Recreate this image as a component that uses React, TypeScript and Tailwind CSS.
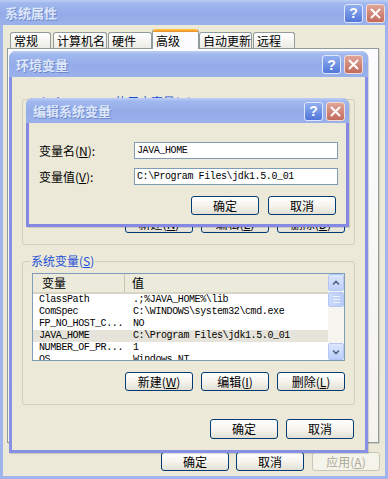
import React from 'react';

const cjk = "font-['Noto_Sans_CJK_SC',sans-serif]";
const mono = "font-['Liberation_Mono',monospace] text-[10px] tracking-[-0.4px]";

const TitleButtons = ({ className }: { className: string }) => (
  <div className={`flex gap-[3px] ${className}`}>
    <div className="flex h-[19px] w-[19px] items-center justify-center rounded-[3px] border border-[#dfe7fb] bg-gradient-to-b from-[#93aff0] to-[#5176d8] font-['Liberation_Sans',sans-serif] text-[14px] font-bold leading-none text-white">
      ?
    </div>
    <div className="flex h-[19px] w-[19px] items-center justify-center rounded-[3px] border border-[#f3dcd6] bg-gradient-to-b from-[#e0a598] to-[#c26a5c]">
      <svg width="11" height="11" viewBox="0 0 11 11">
        <path d="M1.5 1.5 L9.5 9.5 M9.5 1.5 L1.5 9.5" stroke="white" strokeWidth="2" strokeLinecap="round" />
      </svg>
    </div>
  </div>
);

const TitleBar = ({ title, className, btnClass }: { title: string; className: string; btnClass: string }) => (
  <div
    className={`flex shrink-0 items-center justify-between bg-[linear-gradient(180deg,#bccef5_0%,#a0b7ee_14%,#93ace9_55%,#9ab1ea_100%)] ${className}`}
  >
    <span className={`${cjk} text-[13px] font-bold leading-none text-[#dde7f9] [text-shadow:1px_1px_0_#7189cc]`}>{title}</span>
    <TitleButtons className={btnClass} />
  </div>
);

const XpButton = ({ children, disabled, className = '' }: { children: React.ReactNode; disabled?: boolean; className?: string }) => (
  <div
    className={`flex h-[19px] w-[68px] shrink-0 items-center justify-center whitespace-nowrap rounded-[3px] border text-[12px] leading-none ${cjk} ${
      disabled
        ? 'border-[#c9c7ba] bg-[#f5f4ea] text-[#aca899]'
        : 'border-[#003c74] bg-gradient-to-b from-white via-[#f5f4ef] to-[#e2e0d4] text-black'
    } ${className}`}
  >
    {children}
  </div>
);

const U = ({ children }: { children: React.ReactNode }) => <span className="underline underline-offset-1">{children}</span>;

const GroupBox = ({ label, children, className, labelClass = '-top-[8px]' }: { label: React.ReactNode; children: React.ReactNode; className: string; labelClass?: string }) => (
  <div className={`relative flex flex-col rounded-[3px] border border-[#d0d0bf] ${className}`}>
    <div className={`absolute left-[7px] whitespace-nowrap bg-[#ece9d8] px-[1px] text-[12px] leading-[14px] text-[#1c4fd6] ${cjk} ${labelClass}`}>{label}</div>
    {children}
  </div>
);

const rows = [
  ['ClassPath', '.;%JAVA_HOME%\\lib'],
  ['ComSpec', 'C:\\WINDOWS\\system32\\cmd.exe'],
  ['FP_NO_HOST_C...', 'NO'],
  ['JAVA_HOME', 'C:\\Program Files\\jdk1.5.0_01'],
  ['NUMBER_OF_PR...', '1'],
  ['OS', 'Windows_NT'],
];

const ScrollBtn = ({ up }: { up?: boolean }) => (
  <div className="flex h-[17px] w-[16px] shrink-0 items-center justify-center rounded-[2px] border border-[#b4c7f4] bg-gradient-to-b from-[#dde7fd] to-[#bccffa]">
    <svg width="8" height="6" viewBox="0 0 8 6">
      <path d={up ? 'M1 4.5 L4 1.5 L7 4.5' : 'M1 1.5 L4 4.5 L7 1.5'} stroke="#4d6185" strokeWidth="1.6" fill="none" />
    </svg>
  </div>
);

const SysList = () => (
  <div className="flex h-[88px] border border-[#7f9db9] bg-white">
    <div className="flex min-w-0 flex-1 flex-col overflow-hidden">
      <div className={`flex h-[20px] shrink-0 items-center border-b-2 border-[#d8d5c5] bg-[#ebeadb] text-[12px] leading-none ${cjk}`}>
        <div className="flex h-full w-[92px] items-center border-r border-[#c7c5b2] pl-[9px]">变量</div>
        <div className="pl-[7px]">值</div>
      </div>
      {rows.map(([k, v]) => (
        <div key={k} className={`flex h-[12px] shrink-0 items-center leading-none ${k === 'JAVA_HOME' ? 'bg-[#e6e4da]' : ''}`}>
          <div className={`w-[100px] shrink-0 pl-[6px] ${mono}`}>{k}</div>
          <div className={mono}>{v}</div>
        </div>
      ))}
    </div>
    <div className="flex w-[16px] shrink-0 flex-col bg-[#f6f5f0]">
      <ScrollBtn up />
      <div className="mt-[1px] flex h-[15px] flex-col items-center justify-center gap-[2px] rounded-[2px] border border-[#b4c7f4] bg-gradient-to-r from-[#cbdafc] to-[#b9ccf8]">
        <div className="h-px w-[7px] bg-[#eef3fe]" />
        <div className="h-px w-[7px] bg-[#eef3fe]" />
        <div className="h-px w-[7px] bg-[#eef3fe]" />
      </div>
      <div className="flex-1" />
      <ScrollBtn />
    </div>
  </div>
);

const tabs = [
  { label: '常规', cls: 'w-[41px] ml-0' },
  { label: '计算机名', cls: 'w-[54px] ml-[2px]' },
  { label: '硬件', cls: 'w-[44px] ml-[1px]' },
  { label: '高级', cls: 'w-[47px] ml-0', active: true },
  { label: '自动更新', cls: 'w-[53px] ml-0' },
  { label: '远程', cls: 'w-[42px] ml-[1px]' },
];

export default function App() {
  return (
    <div className={`relative flex h-[479px] w-[388px] flex-col overflow-hidden bg-[#9fb4ec] ${cjk}`}>
      {/* 系统属性 */}
      <TitleBar title="系统属性" className="h-[25px] pl-[5px]" btnClass="mr-[3px] mt-[1px]" />
      <div className="mx-[3px] mb-[3px] flex flex-1 flex-col bg-[#ece9d8]">
        <div className="mt-[4px] flex h-[19px] items-end pl-[7px]">
          {tabs.map((t) =>
            t.active ? (
              <div
                key={t.label}
                className={`relative z-10 -mb-px flex h-[20px] flex-col rounded-t-[3px] border-x border-[#919b9c] bg-[#fcfcfe] ${t.cls}`}
              >
                <div className="h-[3px] rounded-t-[3px] bg-gradient-to-b from-[#ffc83c] to-[#e68b2c]" />
                <div className="whitespace-nowrap pl-[3px] pt-[2px] text-[12px] leading-[13px]">{t.label}</div>
              </div>
            ) : (
              <div
                key={t.label}
                className={`flex h-[16px] items-center whitespace-nowrap rounded-t-[3px] border-x border-t border-[#919b9c] bg-gradient-to-b from-white to-[#ecebe5] pl-[3px] text-[12px] leading-none ${t.cls}`}
              >
                {t.label}
              </div>
            ),
          )}
        </div>
        <div className="ml-[4px] h-[395px] w-[372px] border border-[#919b9c] bg-gradient-to-b from-[#fcfcfe] to-[#f4f3ee] shadow-[1px_1px_0_#d0cebf]" />
        <div className="mt-[9px] flex justify-end gap-[7px] pr-[5px]">
          <XpButton>确定</XpButton>
          <XpButton>取消</XpButton>
          <XpButton disabled className="ml-px">
            应用(<U>A</U>)
          </XpButton>
        </div>
      </div>

      {/* 环境变量 */}
      <div className="absolute left-[9px] top-[51px] flex h-[402px] w-[359px] flex-col overflow-hidden rounded-t-[7px] bg-[#8890e3] shadow-[1px_1px_1px_rgba(0,0,0,0.15)]">
        <TitleBar title="环境变量" className="h-[26px] pl-[7px]" btnClass="mr-[5px] mt-[1px]" />
        <div className="mx-[3px] mb-[3px] flex flex-1 flex-col bg-[#ece9d8] px-[10px] pt-[22px]">
          <GroupBox
            className="h-[146px] px-[9px] pt-[11px]"
            labelClass="-top-[5px]"
            label={
              <>
                <span>admin</span>
                <span className="ml-[48px]">
                  的用户变量(<U>U</U>)
                </span>
              </>
            }
          >
            <div className="h-[90px] border border-[#7f9db9] bg-white" />
            <div className="mt-[13px] flex justify-end gap-[8px]">
              <XpButton>
                新建(<U>N</U>)
              </XpButton>
              <XpButton>
                编辑(<U>E</U>)
              </XpButton>
              <XpButton>
                删除(<U>D</U>)
              </XpButton>
            </div>
          </GroupBox>
          <GroupBox
            className="mt-[16px] h-[144px] px-[9px] pt-[11px]"
            label={
              <>
                系统变量(<U>S</U>)
              </>
            }
          >
            <SysList />
            <div className="mt-[11px] flex justify-end gap-[8px]">
              <XpButton>
                新建(<U>W</U>)
              </XpButton>
              <XpButton>
                编辑(<U>I</U>)
              </XpButton>
              <XpButton>
                删除(<U>L</U>)
              </XpButton>
            </div>
          </GroupBox>
          <div className="mt-[14px] flex justify-end gap-[8px] pr-px">
            <XpButton className="h-[20px]">确定</XpButton>
            <XpButton className="h-[20px]">取消</XpButton>
          </div>
        </div>
      </div>

      {/* 编辑系统变量 */}
      <div className="absolute left-[26px] top-[98px] flex h-[129px] w-[323px] flex-col overflow-hidden rounded-t-[7px] bg-[#8589e4] shadow-[1px_1px_1px_rgba(0,0,0,0.15)]">
        <TitleBar title="编辑系统变量" className="h-[25px] pl-[7px]" btnClass="mr-[4px] mt-[1px]" />
        <div className="mx-[3px] mb-[3px] flex flex-1 flex-col bg-[#ece9d8] pl-[10px] pr-[8px] pt-[19px] text-[12px] leading-none">
          <div className="flex h-[17px] items-center">
            <div className="w-[95px] shrink-0">
              变量名(<U>N</U>):
            </div>
            <div className={`flex h-[17px] w-[204px] items-center border border-[#7f9db9] bg-white pl-[2px] ${mono}`}>JAVA_HOME</div>
          </div>
          <div className="mt-[9px] flex h-[17px] items-center">
            <div className="w-[95px] shrink-0">
              变量值(<U>V</U>):
            </div>
            <div className={`flex h-[17px] w-[204px] items-center border border-[#7f9db9] bg-white pl-[2px] ${mono}`}>
              C:\Program Files\jdk1.5.0_01
            </div>
          </div>
          <div className="mt-[11px] flex justify-end gap-[9px] pr-[2px]">
            <XpButton className="w-[67px]">确定</XpButton>
            <XpButton className="w-[67px]">取消</XpButton>
          </div>
        </div>
      </div>
    </div>
  );
}
